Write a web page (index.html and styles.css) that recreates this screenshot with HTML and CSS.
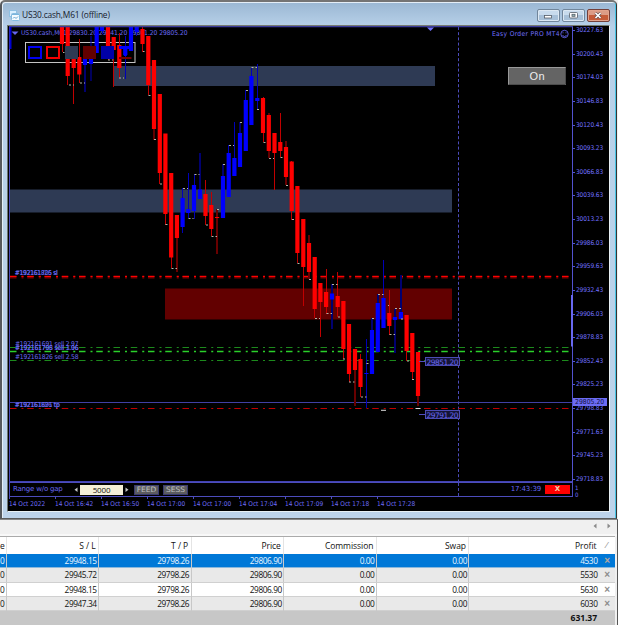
FILE: index.html
```html
<!DOCTYPE html>
<html lang="en">
<head>
<meta charset="utf-8">
<title>US30.cash,M61 (offline)</title>
<link rel="stylesheet" href="styles.css">
</head>
<body>
<section class="window">
  <header class="titlebar">
    <svg class="app-icon" width="11" height="11" viewBox="0 0 11 11">
      <rect x="0.5" y="0.5" width="7" height="6" fill="#d9efff" stroke="#8fc0e2"/>
      <rect x="2.5" y="3.5" width="8" height="7" rx="1" fill="#f4fbff" stroke="#84bce0"/>
      <path d="M3 4.5H10" stroke="#7ab4dc"/>
      <path d="M4 8.5L5.5 7L7 8.5L9 6.5" fill="none" stroke="#6aa6cf"/>
    </svg>
    <h1 class="title">US30.cash,M61 (offline)</h1>
    <div class="controls">
      <span class="control"><svg width="21" height="11" viewBox="0 0 21 11"><rect x="6.500" y="5.500" width="7" height="2.500" fill="#fff" stroke="#555e68" stroke-width=".8"/></svg></span>
      <span class="control"><svg width="21" height="11" viewBox="0 0 21 11"><rect x="6.500" y="2.500" width="8" height="5.500" rx="1" fill="#fff" stroke="#555e68" stroke-width=".8"/><rect x="9" y="4.300" width="3" height="2" fill="#9bb" stroke="#555e68" stroke-width=".8"/></svg></span>
      <span class="control close"><svg width="21" height="11" viewBox="0 0 21 11"><path d="M7.500 3L12.500 8M12.500 3L7.500 8" stroke="#5c4a4a" stroke-width="3"/><path d="M7.500 3L12.500 8M12.500 3L7.500 8" stroke="#fff" stroke-width="1.700"/></svg></span>
    </div>
  </header>

  <div class="client">
    <div class="chart">
      <svg class="plot" width="564" height="456" viewBox="9 26 564 456">
        <g class="zones">
          <rect x="113" y="66" width="322" height="20" class="slate"/>
          <rect x="9" y="189.500" width="443" height="23" class="slate"/>
          <rect x="165" y="288.500" width="287" height="31" class="maroon"/>
        </g>
        <path d="M11.500 31.500H18.500L15 35Z" fill="#6666f0"/>
        <text x="21" y="35.300" textLength="166.500" class="label">US30.cash,M61 29830.20 29841.20 29801.20 29805.20</text>
        <text x="492" y="36.300" textLength="67.500" class="label expert">Easy Order PRO MT4</text>
        <g fill="none" stroke="#6464f0" stroke-width=".9"><circle cx="564.500" cy="34" r="3.700"/><path d="M562.500 35.500Q564.500 37.500 566.500 35.500M563 32.300V33.300M566 32.300V33.300"/></g>
        <path d="M458.500 27V482" class="period"/>

        <g class="levels">
          <path d="M10 277H572" stroke="#780000" stroke-width="3"/>
          <path d="M10 276.500H572" stroke="#f00"/>
          <path d="M10 347.500H572" stroke="#1c8a1c"/>
          <path d="M10 351.500H572" stroke="#2ad02a" stroke-width="1.500"/>
          <path d="M10 360.500H572" stroke="#1c8a1c"/>
          <path d="M10 408.500H572" stroke="#c00000"/>
        </g>
        <path d="M9 402.500H573" stroke="#4040a4"/>

        <g class="label order">
          <text x="15" y="274.800" textLength="43">#192161705 sl</text>
          <text x="14.500" y="275.300" textLength="43">#192161826 sl</text>
          <text x="15" y="345.800" textLength="63.500">#192161691 sell 2.97</text>
          <text x="15" y="350" textLength="63.500">#192161705 sell 1.96</text>
          <text x="15" y="350.300" textLength="63.500">#192161798 sell 3.06</text>
          <text x="15" y="359" textLength="63.500">#192161826 sell 2.58</text>
          <text x="15" y="407" textLength="45">#192161691 tp</text>
          <text x="14.500" y="407.300" textLength="45">#192161826 tp</text>
        </g>

        <rect x="25.500" y="42.500" width="109.500" height="20" fill="none" stroke="#c4c4c4"/>
        <g class="wicks">
          <path class="down" d="M62.500 27V52M67.500 27V85M73.500 52V104M79.500 39V83M108.500 27V60M113.500 37V87M119.500 33V78M142.500 27V52M148.500 36V95M154 60V140M159.500 94V184M165.500 134V225M171.500 173V268M205.500 180V225M211.500 192V236M263.500 97V142M269 113V158M274.500 133V190M280.500 113V157M291.500 161V220M297.500 186V263M303.500 219V306M314.500 257V318M320.500 283V337M326.500 269V314M337.500 272V317M343.500 301V359M349.500 324V382M360.500 354V397M389.500 290V335M406.500 315V361M412.500 333V380"/>
          <path class="down dim" d="M177 215V272M217 209V254M286 141V185M309 235V279M355 349V406M418 352V406"/>
          <path class="up" d="M91 36V81M102.500 27V34M125.500 36V79M136.500 27V36M182.500 188V233M188.500 173V218M194.500 174V219M228.500 145V197M234.500 122V176M251.500 68V125M257.500 64V109M366.500 339V408M383.500 260V328M245.500 90V151"/>
          <path class="up dim" d="M85 47V92M200 153V199M223 164V218M240 122V167M332 284V329M372 318V374M378 294V352M395 309V353M401 275V319"/>
        </g>
        <g class="bodies">
          <path class="down" d="M62 27V44M67.700 27V76M73.700 57V68M79.300 57V74.500M108 27V46M113.700 37V50M119.300 45V68M142.500 29V44M148.300 36V85M154 60V129M159.800 94V173M165.400 133.500V214M171.200 173V257.500M176.900 215V238M205.500 194V216M211.300 205V229M217.100 217V218M263 98V133M268.800 115V151M274.500 133V153M280.300 142V151M286 147V177M291.700 161.500V211M297.400 186V253M303.300 219V267M309 243V272M314.700 257V309M320.400 283V302M326.100 292V307M337.700 296V307M343.400 301V349M349 324V374M355 349V370M360.500 359V387M389.300 313V326M406.600 315V351M412.300 333V372M418 352V396"/>
          <path class="up" d="M85 58V65M91 51V64M96.700 27V53M102 27V31M125.300 46V55M131 27V51M136.700 27V32M182.600 198V227M188.300 209V213M194 185V211M200 189.500V199M223 176V218M228.700 153V197M234.400 158V176M240 133V167M245.800 100V151M251.400 76V125M257.300 98V101M332 293.500V299.500M366.400 373V374M372 330V374M377.800 303V352M383.500 298V328M395 317V320M400.900 312V319"/>
        </g>
        <path class="ticks" d="M63 52.500H64.500M69 85H74M80 83H85M108 60H113M119 78H124M143 51.500H144.500M148.500 95.500H150.500M154 139.500H156M160 184H162M165.500 224.500H167.500M171.500 268.500H177M183 188.500H188M188.500 218.500H193.500M194.500 174.500H199.500M206 225H208M211.500 236.500H217M217 209.500H219M223 164.500H225M229 145.500H234M240 122.500H242M246 90.500H248M251.500 67.500H257M257 109.500H259M263.500 142.500H265.500M269 158.500H274M280.500 157.500H282.500M286 185.500H288M292 219.500H294M297.500 263.500H299.500M309 279.500H311M315 318.500H320M326.500 313.500H332M332 284.500H337.500M338 317H340M343 359H345M349 382H354.500M361 397H366.500M366.500 363.500H368.500M372 318.500H374M378 294.500H383.500M388 305.500H389M389.500 334.500H395M395 308.500H401M401 319H403M407 361H409M412 379.500H414"/>
        <path d="M381 410.300H386M415.500 408.500H420.500" stroke="#ddd"/>

        <path class="swatch-line" stroke="#0000f0" d="M29 47H41V58H29Z"/>
        <path class="swatch-line" stroke="#f00000" d="M47 47H59V58H47Z"/>
        <rect x="65" y="46" width="13" height="13" class="slate"/>
        <rect x="83" y="46" width="13" height="13" class="maroon"/>
        <rect x="101" y="46" width="13" height="13" fill="#0000a8"/>
        <path d="M119 47.500H132M125.300 48V56" stroke="#00f" stroke-width="3"/>
        <path d="M119 58H131.500" stroke="#780000" stroke-width="2"/>

        <path d="M419 361.500H426M419 414.500H426" stroke="#5050c0"/>
        <g class="price-tag">
          <rect x="425.500" y="357.500" width="34" height="8"/>
          <rect x="425.500" y="410.500" width="34" height="8"/>
          <text x="426.500" y="364.700" textLength="32">29851.20</text>
          <text x="426.500" y="417.700" textLength="32">29791.20</text>
        </g>

        <rect x="508.500" y="67.500" width="57" height="17" fill="#646464" stroke="#999"/>
        <path d="M508.500 84.500H565.500V67.500" fill="none" stroke="#4c4c4c"/>
        <text x="529.500" y="79.800" textLength="15" class="toggle">On</text>

        <path d="M9 26.500H573" stroke="#3c3c9a" stroke-width="1.500"/>
        <path d="M9.500 27V482" stroke="#4a4ab8"/>
        <path d="M10.500 27V49" stroke="#0000d0" stroke-width="2"/>
        <path d="M9 481.500H573" stroke="#4242b0"/>
        <path d="M572.500 27V482" stroke="#5252d0"/>
        <path d="M572.500 295V346.500" stroke="#6868f0" stroke-width="3"/>
        <path d="M427 27.500H434L430.500 31Z" fill="#7272ff"/>
      </svg>

      <div class="strip">
        <span class="strip-name">Range w/o gap</span>
        <svg class="arrow" width="4" height="6"><path d="M3.500 .500V5L.500 2.750Z" fill="#c8c8c8"/></svg>
        <span class="amount">5000</span>
        <svg class="arrow" width="4" height="6"><path d="M.500 .500V5L3.500 2.750Z" fill="#c8c8c8"/></svg>
        <span class="flag feed">FEED</span>
        <span class="flag">SESS</span>
        <span class="clock">17:43:39</span>
        <span class="kill">X</span>
      </div>

      <div class="times">
        <span>14 Oct 2022</span><span>14 Oct 16:42</span><span>14 Oct 16:50</span><span>14 Oct 17:00</span><span>14 Oct 17:00</span><span>14 Oct 17:04</span><span>14 Oct 17:09</span><span>14 Oct 17:18</span><span>14 Oct 17:28</span>
      </div>
    </div>

    <aside class="prices">
      <div class="scale">
        <span>30227.63</span><span>30200.43</span><span>30174.03</span><span>30146.83</span><span>30120.43</span><span>30093.23</span><span>30066.83</span><span>30039.63</span><span>30013.23</span><span>29986.03</span><span>29959.63</span><span>29932.43</span><span>29906.03</span><span>29878.83</span><span>29852.43</span><span>29825.23</span><span>29798.83</span><span>29771.63</span><span>29745.23</span><span>29718.83</span>
      </div>
      <div class="strip-scale"><span>1</span><span>0</span></div>
      <b class="current">29805.20</b>
    </aside>
  </div>
</section>

<section class="terminal">
  <div class="tabs"><svg width="20" height="6"><path d="M3.500 .500V5.500L.500 3Z M14.500 .500V5.500L17.500 3Z" fill="#8a8a8a"/></svg></div>
  <div class="grid">
    <div class="row head"><span>e</span><span>S / L</span><span>T / P</span><span>Price</span><span>Commission</span><span>Swap</span><span>Profit</span><i>⁄</i></div>
    <div class="row selected"><span>0</span><span>29948.15</span><span>29798.26</span><span>29806.90</span><span>0.00</span><span>0.00</span><span>4530</span><i>×</i></div>
    <div class="row alt"><span>0</span><span>29945.72</span><span>29798.26</span><span>29806.90</span><span>0.00</span><span>0.00</span><span>5530</span><i>×</i></div>
    <div class="row"><span>0</span><span>29948.15</span><span>29798.26</span><span>29806.90</span><span>0.00</span><span>0.00</span><span>5630</span><i>×</i></div>
    <div class="row alt"><span>0</span><span>29947.34</span><span>29798.26</span><span>29806.90</span><span>0.00</span><span>0.00</span><span>6030</span><i>×</i></div>
    <div class="total">631.37</div>
  </div>
</section>
</body>
</html>
```
FILE: styles.css
```css
* { box-sizing: border-box; }
body {
  margin: 0;
  width: 618px;
  height: 625px;
  overflow: hidden;
  display: flex;
  flex-direction: column;
  background: #f0f0f0;
  font-family: "Open Sans", "Noto Sans", sans-serif;
}

/* chart window */
.window {
  height: 519px;
  flex: none;
  display: flex;
  flex-direction: column;
  padding: 1px 6px 6px 5px;
  background: linear-gradient(#9ab7d3, #b7d0e8 24px, #bdd3ea);
  border-style: solid;
  border-width: 2px 1px 1px 2px;
  border-color: #747474 #333 #5b5b5b #55585c;
  border-radius: 5px 5px 0 0;
  box-shadow: inset 1px 1px 0 #e4eef7, inset -1px 0 0 #47c4e4;
  margin-right: 1px;
}
.titlebar {
  height: 22px;
  flex: none;
  display: flex;
  align-items: center;
  padding: 2px 0 0 2px;
}
.title {
  margin: 0 0 0 2px;
  font-size: 8.4px;
  font-weight: 400;
  line-height: 12px;
  color: #16202c;
  letter-spacing: -.16px;
}
.controls { margin-left: auto; display: flex; gap: 2px; }
.control {
  width: 23px;
  height: 13px;
  display: flex;
  border: 1px solid #71869b;
  border-radius: 2px;
  background: linear-gradient(#c8dbed 50%, #a7c0d8 50%);
  box-shadow: inset 0 0 0 1px #dce8f3;
}
.close {
  background: linear-gradient(#dc9c86 50%, #c55b38 50%);
  border-color: #74403a;
  box-shadow: inset 0 0 0 1px #e3a38c;
}
.client {
  flex: 1;
  display: flex;
  background: #000;
  border-top: 1px solid #777a70;
  border-left: 1px solid #6c7470;
  border-right: 1px solid #e8f0f4;
  border-bottom: 1px solid #e8f0f4;
}
.chart { width: 565px; flex: none; padding-left: 1px; display: flex; flex-direction: column; }
.plot { display: block; flex: none; }

.slate { fill: #2e3a54; }
.maroon { fill: #620000; }
.label { fill: #6a6af6; font-size: 6.7px; font-family: "DejaVu Sans Condensed", "DejaVu Sans", sans-serif; }
.expert { fill: #7070ff; }
.order { fill: #6a6af4; }
.period { stroke: #4c4cbc; stroke-dasharray: 3 2.2; }
.levels path { stroke-dasharray: 6.5 5 2 3.750; }
.wicks path, .bodies path { fill: none; }
.wicks .down { stroke: #c00000; }
.wicks .up { stroke: #0000b8; }
.wicks .down.dim { stroke: #680000; stroke-width: 2; }
.wicks .up.dim { stroke: #000070; stroke-width: 2; }
.bodies path { stroke-width: 4.2; }
.bodies .down { stroke: #f00; }
.bodies .up { stroke: #00f; }
.ticks { stroke: #b4b4a8; stroke-dasharray: 2 2; fill: none; }
.swatch-line { fill: none; stroke-width: 2; }
.price-tag rect { fill: #141436; stroke: #4c4cb4; }
.price-tag text { fill: #6a6af0; font: 7.5px "DejaVu Sans", sans-serif; }
.toggle { fill: #eee; font: 11px "Liberation Sans", sans-serif; }

/* indicator strip */
.strip {
  height: 15px;
  flex: none;
  display: flex;
  align-items: center;
  border: 1px solid #4c4cbc;
  border-left-color: #4a4ab8;
  padding-left: 3px;
  font: 7px/9px "DejaVu Sans", sans-serif;
  color: #6868f2;
  background: repeating-linear-gradient(#4848b4 0 3px, #000 3px 5px) 448px 0 / 1px 100% no-repeat;
}
.strip-name { width: 61px; letter-spacing: -.2px; }
.arrow { flex: none; }
.amount {
  width: 43px;
  height: 10px;
  margin: 0 2px;
  text-align: center;
  line-height: 10px;
  font-family: "Open Sans", sans-serif;
  font-size: 8px;
  letter-spacing: -.15px;
  color: #111;
  background: #f5f0d8;
}
.flag {
  width: 25px;
  height: 10px;
  text-align: center;
  font-size: 7.5px;
  color: #c0c0c0;
  background: #5c5c60;
  border: 1px solid #3a3a70;
  line-height: 8px;
}
.feed { margin: 0 4px 0 5px; }
.clock { margin-left: auto; letter-spacing: -.15px; }
.kill {
  width: 25px;
  height: 9px;
  margin: 0 2px 0 4px;
  background: #f00;
  color: #f4d0b0;
  text-align: center;
  font-weight: 700;
}
.times { display: flex; font: 6.5px/8px "DejaVu Sans Condensed", "DejaVu Sans", sans-serif; color: #6c6cf8; }
.times span { width: 46px; flex: none; padding-top: 3px; white-space: nowrap; background: linear-gradient(#4c4cbc, #4c4cbc) 0 0 / 1px 2px no-repeat; }

/* price axis */
.prices { position: relative; flex: 1; color: #7070ff; font: 6.5px/8px "DejaVu Sans Condensed", "DejaVu Sans", sans-serif; }
.scale { height: 457px; display: flex; flex-direction: column; justify-content: space-between; }
.scale span { height: 8px; padding-left: 3px; letter-spacing: -.1px; background: linear-gradient(#5252d0, #5252d0) 0 4px / 2px 1px no-repeat; }
.strip-scale { display: flex; flex-direction: column; padding: 1px 0 0 2px; font-size: 6px; line-height: 7px; }
.current {
  position: absolute;
  left: 0;
  top: 372px;
  width: 34px;
  height: 8px;
  padding-left: 2px;
  line-height: 8px;
  font-weight: 400;
  font-size: 6.8px;
  background: #6c6cf4;
  color: #101040;
}

/* trade list */
.terminal { flex: 1; display: flex; flex-direction: column; border-top: 1px solid #888; border-right: 1px solid #555; }
.tabs { height: 16px; flex: none; display: flex; justify-content: flex-end; padding: 3px 4px 0 0; border-bottom: 2px solid #f8f8f8; }
.grid { flex: 1; width: 615px; border-top: 1px solid #aaa; display: flex; flex-direction: column; background: #c7c7c7; }
.row {
  height: 14.3px;
  flex: none;
  display: grid;
  grid-template-columns: 6.500px repeat(5, 92.600px) 129.500px 16px;
  font-size: 8.300px;
  line-height: 13px;
  letter-spacing: -.42px;
  text-align: right;
  color: #111;
  background: #fff;
  border-bottom: 1px solid #d0d0d0;
}
.row span { padding-right: 1.500px; border-right: 1px solid #c8c8c8; }
.row span:nth-child(7) { border-right: 0; }
.row i { font: 10px/14px "Liberation Sans", sans-serif; font-weight: 700; color: #8c8c8c; text-align: center; }
.head { height: 17px; line-height: 17px; border-bottom: 0; font-size: 8.5px; letter-spacing: -.05px; }
.head span { padding-right: 2.500px; border-color: #e4e4e4; }
.head i { font-size: 9px; font-weight: 400; line-height: 17px; }
.alt { background: #e9e9e9; }
.selected { background: #0078d7; color: #e8f6ff; border-bottom-color: #8ab8dc; }
.selected i { color: #b8a8a0; }
.total { padding-right: 18px; text-align: right; font-size: 8.600px; line-height: 14px; font-weight: 700; color: #111; letter-spacing: -.1px; }
```
